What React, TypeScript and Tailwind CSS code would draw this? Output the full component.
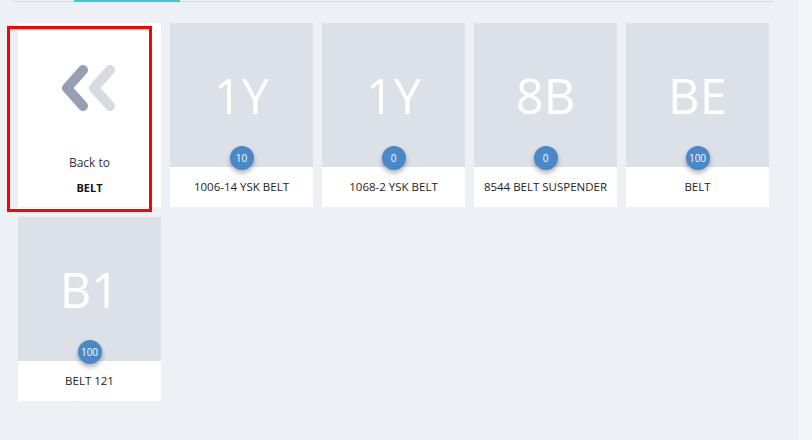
const items = [
  { code: '1Y', count: 10, name: '1006-14 YSK BELT' },
  { code: '1Y', count: 0, name: '1068-2 YSK BELT' },
  { code: '8B', count: 0, name: '8544 BELT SUSPENDER' },
  { code: 'BE', count: 100, name: 'BELT' },
  { code: 'B1', count: 100, name: 'BELT 121' },
];

function BackCard() {
  return (
    <div className="relative h-[184px] bg-white flex flex-col items-center">
      <svg className="mt-[41px] h-[48px] w-[60px]" viewBox="0 0 60 48" fill="none">
        <path d="M50 6 L34 24 L50 42" stroke="#d6dae1" strokeWidth={10} strokeLinecap="round" strokeLinejoin="round" />
        <path d="M23 6 L7 24 L23 42" stroke="#959fb1" strokeWidth={10} strokeLinecap="round" strokeLinejoin="round" />
      </svg>
      <div className="mt-[42px] text-[12px] leading-[18px] text-[#333]">Back to</div>
      <div className="mt-[8px] text-[11px] leading-[16px] font-bold text-[#111]">BELT</div>
    </div>
  );
}

function ItemCard({ code, count, name }: { code: string; count: number; name: string }) {
  return (
    <div className="h-[184px] flex flex-col bg-white">
      <div className="relative h-[144px] bg-[#dce0e7] flex items-center justify-center">
        <span className="mt-[1px] text-[49px] leading-none text-white font-normal">{code}</span>
        <span className="absolute left-1/2 top-[123px] -translate-x-1/2 h-[24px] min-w-[24px] px-[3px] rounded-full bg-[#4a88c7] text-white text-[10px] leading-[24px] text-center shadow-[0_3px_5px_rgba(0,0,0,0.3)]">
          {count}
        </span>
      </div>
      <div className="flex-1 flex items-center justify-center text-[11.5px] text-[#222]">{name}</div>
    </div>
  );
}

export default function App() {
  return (
    <div className="relative w-[812px] h-[440px] bg-[#f3f5f8] font-['Open_Sans',sans-serif]">
      <div className="w-[798px] h-[440px] bg-[#edf0f5]">
        <div className="relative ml-[12px] w-[761px] h-[2px] border-b border-[#d6dbe2]">
          <div className="absolute left-[62px] top-0 w-[106px] h-[2px] bg-[#3ec7db]" />
        </div>
        <div className="pl-[18px] pt-[21px] grid grid-cols-[repeat(5,143px)] gap-x-[9px] gap-y-[10px]">
          <BackCard />
          {items.map((it, i) => (
            <ItemCard key={i} {...it} />
          ))}
        </div>
      </div>
      <div className="absolute left-[7px] top-[26px] w-[145px] h-[186px] border-[3px] border-[#ff0000]" />
    </div>
  );
}
